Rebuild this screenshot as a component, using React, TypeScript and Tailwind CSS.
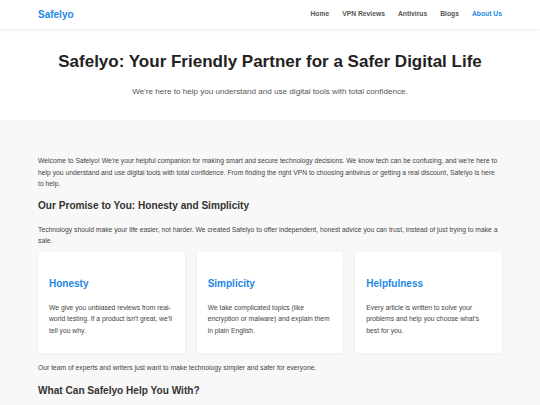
import React from "react";

const navLinks = ["Home", "VPN Reviews", "Antivirus", "Blogs", "About Us"];

const values = [
  {
    title: "Honesty",
    text: "We give you unbiased reviews from real-world testing. If a product isn't great, we'll tell you why.",
  },
  {
    title: "Simplicity",
    text: "We take complicated topics (like encryption or malware) and explain them in plain English.",
  },
  {
    title: "Helpfulness",
    text: "Every article is written to solve your problems and help you choose what's best for you.",
  },
];

function Header() {
  return (
    <header className="relative z-10 h-[29px] bg-white shadow-[0_1px_4px_rgba(0,0,0,0.08)]">
      <div className="mx-[38px] flex h-full items-center justify-between">
        <div className="text-[10px] font-bold text-[#1e88e5]">Safelyo</div>
        <nav className="flex gap-[13px] text-[6.75px] font-bold text-[#555]">
          {navLinks.map((link) => (
            <a
              key={link}
              href="#"
              className={link === "About Us" ? "text-[#1e88e5]" : ""}
            >
              {link}
            </a>
          ))}
        </nav>
      </div>
    </header>
  );
}

function Hero() {
  return (
    <section className="bg-white pt-[23px] pb-[21px] text-center">
      <h1 className="text-[17px] leading-[20px] font-bold text-[#222]">
        Safelyo: Your Friendly Partner for a Safer Digital Life
      </h1>
      <p className="mt-[13px] text-[8.1px] leading-[14px] text-[#555]">
        We're here to help you understand and use digital tools with total
        confidence.
      </p>
    </section>
  );
}

function ValueCard({ title, text }: { title: string; text: string }) {
  return (
    <div className="rounded-[3px] bg-white px-[11px] pt-[26px] pb-[17px] shadow-[0_1px_4px_rgba(0,0,0,0.06)]">
      <h3 className="text-[10px] leading-[12px] font-bold text-[#1e88e5]">
        {title}
      </h3>
      <p className="mt-[12px] text-[6.75px] leading-[11.5px] text-[#444]">
        {text}
      </p>
    </div>
  );
}

export default function App() {
  return (
    <div
      className="min-h-[405px] bg-[#f8f8f8]"
      style={{ fontFamily: '"Liberation Sans", Arial, sans-serif' }}
    >
      <Header />
      <Hero />
      <main className="mx-[38px] pt-[35px] text-[6.75px] leading-[11.5px] text-[#444]">
        <p>
          Welcome to Safelyo! We're your helpful companion for making smart and
          secure technology decisions. We know tech can be confusing, and we're
          here to help you understand and use digital tools with total
          confidence. From finding the right VPN to choosing antivirus or
          getting a real discount, Safelyo is here to help.
        </p>
        <h2 className="mt-[10px] text-[10.1px] leading-[12px] font-bold text-[#333]">
          Our Promise to You: Honesty and Simplicity
        </h2>
        <p className="mt-[12px]">
          Technology should make your life easier, not harder. We created
          Safelyo to offer independent, honest advice you can trust, instead of
          just trying to make a sale.
        </p>
        <div className="mt-[5px] grid grid-cols-3 gap-[12px]">
          {values.map((v) => (
            <ValueCard key={v.title} title={v.title} text={v.text} />
          ))}
        </div>
        <p className="mt-[9px]">
          Our team of experts and writers just want to make technology simpler
          and safer for everyone.
        </p>
        <h2 className="mt-[11px] text-[10.1px] leading-[12px] font-bold text-[#333]">
          What Can Safelyo Help You With?
        </h2>
      </main>
    </div>
  );
}
